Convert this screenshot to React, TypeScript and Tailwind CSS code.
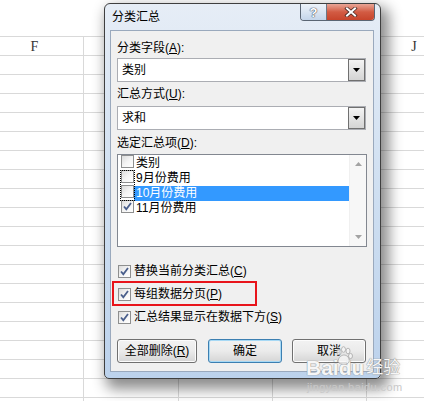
import React from "react";

const FONT = "font-['Liberation_Sans','Noto_Sans_CJK_SC',sans-serif]";

const Checkbox = ({ checked }: { checked?: boolean }) => (
  <span className="relative inline-block w-[13px] h-[13px] shrink-0 border border-[#8e8f8f] bg-gradient-to-br from-[#dcdcdc] via-[#f4f4f4] to-white">
    {checked && (
      <svg viewBox="0 0 11 11" className="absolute inset-0 w-[11px] h-[11px]">
        <path d="M2 5.5 L4.3 8.2 L9 2" fill="none" stroke="#4a5f8c" strokeWidth="1.8" />
      </svg>
    )}
  </span>
);

const Combo = ({ value }: { value: string }) => (
  <div className="flex h-[24px] w-[249px] border border-[#abadb3] bg-white">
    <div className="flex-1 pl-[4px] leading-[22px] text-[12px] text-black">{value}</div>
    <div className="w-[17px] h-[22px] border border-[#707070] bg-gradient-to-b from-[#f4f4f4] to-[#d4d4d4] flex items-center justify-center">
      <svg viewBox="0 0 7 4" className="w-[7px] h-[4px]">
        <path d="M0 0 H7 L3.5 4 Z" fill="#000" />
      </svg>
    </div>
  </div>
);

const items = [
  { label: "类别", checked: false },
  { label: "9月份费用", checked: false },
  { label: "10月份费用", checked: false, selected: true },
  { label: "11月份费用", checked: true },
];

const Button = ({ children, wide, primary }: { children: React.ReactNode; wide?: boolean; primary?: boolean }) => (
  <div
    className={`h-[24px] ${wide ? "w-[80px]" : "w-[74px]"} rounded-[3px] border ${
      primary ? "border-[#3c7fb1] shadow-[inset_0_0_0_1px_#a7d9f5]" : "border-[#707070] shadow-[inset_0_0_0_1px_#fcfcfc]"
    } bg-gradient-to-b from-[#f2f2f2] via-[#ebebeb] to-[#d5d5d5] flex items-center justify-center text-[12px] text-black`}
  >
    {children}
  </div>
);

export default function App() {
  const rows = Array.from({ length: 19 });
  return (
    <div className={`relative w-[424px] h-[401px] overflow-hidden bg-white ${FONT}`}>
      {/* spreadsheet */}
      <div className="h-[37px] border-b border-[#d9d9d9]" />
      <div className="flex h-[19px] border-b border-[#d9d9d9] font-['Liberation_Serif',serif] text-[14px] text-[#333]">
        <div className="w-[84px] shrink-0 border-r border-[#d9d9d9] pr-[14px] text-center leading-[20px]">F</div>
        <div className="w-[95px] shrink-0 border-r border-[#d9d9d9]" />
        <div className="w-[94px] shrink-0 border-r border-[#d9d9d9]" />
        <div className="w-[94px] shrink-0 border-r border-[#d9d9d9]" />
        <div className="w-[94px] shrink-0 text-center leading-[20px]">J</div>
      </div>
      {rows.map((_, i) => (
        <div key={i} className="flex h-[19px] border-b border-[#d9d9d9]">
          <div className="w-[84px] shrink-0 border-r border-[#d9d9d9]" />
          <div className="w-[95px] shrink-0 border-r border-[#d9d9d9]" />
          <div className="w-[94px] shrink-0 border-r border-[#d9d9d9]" />
          <div className="w-[94px] shrink-0 border-r border-[#d9d9d9]" />
        </div>
      ))}

      {/* dialog window */}
      <div className="absolute left-[104px] top-[3px] w-[277px] h-[376px] rounded-t-[6px] rounded-b-[5px] border border-[#3f3f3f] bg-gradient-to-b from-[#e6edf6] via-[#cfdff1] to-[#bcd2ec] shadow-[5px_7px_14px_3px_rgba(0,0,0,0.45)] pl-[5px] pr-[6px] pb-[6px] flex flex-col">
        <div className="h-[26px] flex items-start">
          <div className="pt-[5px] pl-[2px] text-[12px] leading-[16px] text-black flex-1">分类汇总</div>
          <div className="flex mr-[-1px] h-[17px] rounded-b-[4px] border border-t-0 border-[#5a6573] overflow-hidden">
            <div className="w-[26px] h-full bg-gradient-to-b from-[#edf2f8] via-[#dae5f2] to-[#c4d5ea] border-r border-[#6b7785] flex items-center justify-center text-[13px] font-bold text-white leading-none [text-shadow:0_0_1px_#4b5563,0_0_1px_#4b5563,0_0_1px_#4b5563]">
              ?
            </div>
            <div className="w-[47px] h-full bg-gradient-to-b from-[#e8a596] via-[#d25b43] to-[#c7442b] flex items-center justify-center">
              <svg viewBox="0 0 14 10" className="w-[14px] h-[10px]">
                <path d="M3 1.5 L11 8.5 M11 1.5 L3 8.5" stroke="#4b2a24" strokeWidth="3.6" strokeLinecap="square" />
                <path d="M3 1.5 L11 8.5 M11 1.5 L3 8.5" stroke="#fff" strokeWidth="2" strokeLinecap="square" />
              </svg>
            </div>
          </div>
        </div>

        <div className="relative flex-1 border border-[#9aa9bd] bg-[#f0f0f0] pl-[6px] pt-[9px] text-[12px] text-black">
          <div className="h-[16px] leading-[16px]">
            分类字段(<span className="underline">A</span>):
          </div>
          <div className="mt-[2px]">
            <Combo value="类别" />
          </div>
          <div className="mt-[4px] h-[16px] leading-[16px]">
            汇总方式(<span className="underline">U</span>):
          </div>
          <div className="mt-[4px]">
            <Combo value="求和" />
          </div>
          <div className="mt-[5px] h-[16px] leading-[16px]">
            选定汇总项(<span className="underline">D</span>):
          </div>

          <div className="relative mt-[3px] flex h-[93px] w-[250px] border border-[#828790] bg-white">
            <div className="flex-1 pt-[1px]">
              {items.map((it) => (
                <div key={it.label} className="flex h-[15px] items-center">
                  <span className="ml-[3px]">
                    <Checkbox checked={it.checked} />
                  </span>
                  <span
                    className={`flex-1 h-[15px] pl-[2px] leading-[15px] ${
                      it.selected ? "bg-[#3399ff] text-white" : ""
                    }`}
                  >
                    {it.label}
                  </span>
                </div>
              ))}
            </div>
            <div className="w-[17px] bg-[#f7f7f7] border-l border-[#f0f0f0] flex flex-col justify-between items-center py-[7px]">
              <svg viewBox="0 0 7 4" className="w-[7px] h-[4px]">
                <path d="M0 4 H7 L3.5 0 Z" fill="#a3a3a3" />
              </svg>
              <svg viewBox="0 0 7 4" className="w-[7px] h-[4px]">
                <path d="M0 0 H7 L3.5 4 Z" fill="#a3a3a3" />
              </svg>
            </div>
            <div className="absolute left-[2px] top-[15px] w-[15px] h-[31px] border border-dotted border-black" />
          </div>

          <div className="mt-[16px] h-[16px] flex items-center gap-[3px] pl-[1px]">
            <Checkbox checked />
            <span className="leading-[16px]">
              替换当前分类汇总(<span className="underline">C</span>)
            </span>
          </div>
          <div className="mt-[7px] h-[16px] flex items-center gap-[3px] pl-[1px]">
            <Checkbox checked />
            <span className="leading-[16px]">
              每组数据分页(<span className="underline">P</span>)
            </span>
          </div>
          <div className="mt-[7px] h-[16px] flex items-center gap-[3px] pl-[1px]">
            <Checkbox checked />
            <span className="leading-[16px]">
              汇总结果显示在数据下方(<span className="underline">S</span>)
            </span>
          </div>

          <div className="mt-[14px] flex">
            <Button wide>
              全部删除(<span className="underline">R</span>)
            </Button>
            <div className="ml-[11px]">
              <Button primary>确定</Button>
            </div>
            <div className="ml-[10px]">
              <Button>取消</Button>
            </div>
          </div>

          {/* red annotation box */}
          <div className="absolute left-[1px] top-[250px] w-[145px] h-[25px] border-2 border-[#e8141b]" />
        </div>
      </div>

      {/* watermark */}
      <div className="absolute left-[306px] top-[357px] flex items-end text-[#f6f6f6] [text-shadow:0_0_1px_#8f8f8f,0_0_1px_#8f8f8f]">
        <span className="text-[21px] font-bold leading-[21px] font-['Liberation_Sans',sans-serif]">Bai</span>
        <span className="relative text-[21px] font-bold leading-[21px] font-['Liberation_Sans',sans-serif]">
          du
          <svg viewBox="0 0 20 20" className="absolute left-[-5px] top-[-11px] w-[20px] h-[20px] opacity-80">
            <g fill="#f6f6f6" stroke="#9a9a9a" strokeWidth="0.8">
              <ellipse cx="5" cy="6" rx="2.2" ry="3" />
              <ellipse cx="9.5" cy="3.5" rx="2" ry="2.8" />
              <ellipse cx="14" cy="5" rx="2" ry="2.8" />
              <ellipse cx="16.5" cy="10" rx="2" ry="2.6" />
              <path d="M4 16 C4 11 8 9 10 9 C13 9 16 12 15 16 C14 19 6 19 4 16 Z" />
            </g>
          </svg>
        </span>
        <span className="ml-[2px] text-[17px] leading-[20px]">经验</span>
      </div>
      <div className="absolute left-[307px] top-[381px] text-[11px] leading-[12px] text-[#c9c9c9] font-['Liberation_Sans',sans-serif] tracking-[0.4px]">
        jingyan.baidu.com
      </div>
    </div>
  );
}
